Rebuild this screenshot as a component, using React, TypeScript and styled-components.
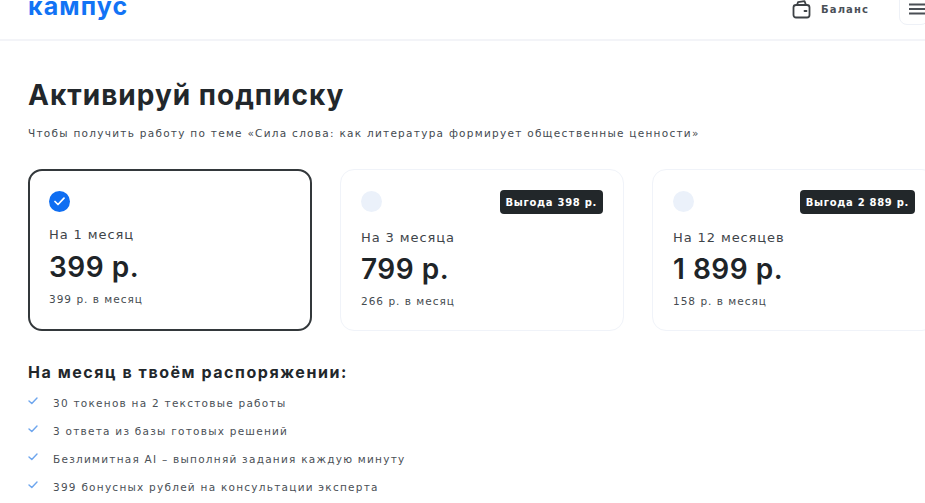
import styled, { createGlobalStyle } from 'styled-components';

const GlobalStyle = createGlobalStyle`
  html, body {
    margin: 0;
    padding: 0;
    background: #fff;
    overflow: hidden;
  }
  body {
    font-family: Inter, "Noto Sans", sans-serif;
    color: #1e2428;
  }
`;

const SMALL_FONT = '"DejaVu Sans", Inter, sans-serif';

const Page = styled.div`
  width: 925px;
  height: 503px;
  overflow: hidden;
`;

const Header = styled.header`
  height: 41px;
  box-sizing: border-box;
  padding-left: 28px;
  display: flex;
  align-items: flex-end;
  justify-content: space-between;
  border-bottom: 2px solid #f3f4f8;
  overflow: hidden;
`;

const Logo = styled.div`
  font-size: 25px;
  line-height: 24px;
  font-weight: 700;
  letter-spacing: 1.1px;
  color: #1273f5;
  margin-bottom: 21px;
`;

const HeaderRight = styled.div`
  display: flex;
  align-items: flex-end;
`;

const Balance = styled.div`
  display: flex;
  align-items: center;
  gap: 10px;
  margin-bottom: 20px;
  margin-right: 30px;
  font-family: ${SMALL_FONT};
  font-size: 10px;
  font-weight: 700;
  letter-spacing: 1.1px;
  color: #4a5058;
`;

const MenuButton = styled.div`
  width: 30px;
  height: 34px;
  margin-right: -4px;
  margin-bottom: 14px;
  box-sizing: border-box;
  border: 1px solid #eef1f7;
  border-radius: 8px;
  padding: 7px 0 0 9px;
  color: #4a4f55;
`;

const Main = styled.main`
  padding: 36px 0 0 28px;
`;

const Title = styled.h1`
  margin: 0;
  font-size: 28px;
  line-height: 36px;
  font-weight: 700;
  letter-spacing: 1px;
  color: #22272b;
`;

const Subtitle = styled.p`
  margin: 13px 0 0;
  font-family: ${SMALL_FONT};
  font-size: 10.5px;
  line-height: 14px;
  letter-spacing: 1.27px;
  white-space: nowrap;
  color: #444a50;
`;

const Plans = styled.div`
  display: flex;
  gap: 28px;
  margin-top: 29px;
`;

const Card = styled.div<{ $selected?: boolean }>`
  position: relative;
  flex: 0 0 284px;
  height: 162px;
  box-sizing: border-box;
  border-radius: 14px;
  padding: ${({ $selected }) => ($selected ? '20px 19px' : '21px 20px')};
  border: ${({ $selected }) => ($selected ? '2px solid #33383b' : '1px solid #f0f3f9')};
  background: #fff;
`;

const Radio = styled.div<{ $checked?: boolean }>`
  width: 21px;
  height: 21px;
  border-radius: 50%;
  background: ${({ $checked }) => ($checked ? '#0f6ef2' : '#ebf1fa')};
  display: flex;
  align-items: center;
  justify-content: center;
`;

const Badge = styled.div`
  position: absolute;
  top: 20px;
  right: 20px;
  height: 24px;
  padding: 0 6px;
  display: flex;
  align-items: center;
  border-radius: 4px;
  background: #22272a;
  color: #fff;
  font-family: ${SMALL_FONT};
  font-size: 10px;
  font-weight: 700;
  letter-spacing: 0.7px;
  white-space: nowrap;
`;

const Period = styled.div<{ $selected?: boolean }>`
  margin-top: ${({ $selected }) => ($selected ? '14px' : '17px')};
  font-family: ${SMALL_FONT};
  font-size: 13px;
  line-height: 18px;
  letter-spacing: 0.9px;
  color: #3e4449;
`;

const Price = styled.div<{ $selected?: boolean }>`
  margin-top: ${({ $selected }) => ($selected ? '5px' : '4px')};
  font-size: 28px;
  line-height: 36px;
  font-weight: 600;
  letter-spacing: 0.5px;
  color: #1e2428;
`;

const PerMonth = styled.div`
  margin-top: 7px;
  font-family: ${SMALL_FONT};
  font-size: 10.5px;
  line-height: 14px;
  letter-spacing: 1px;
  color: #454b50;
`;

const FeaturesTitle = styled.h2`
  margin: 31px 0 0;
  font-size: 16px;
  line-height: 20px;
  font-weight: 700;
  letter-spacing: 1.55px;
  color: #22272b;
`;

const FeatureList = styled.ul`
  list-style: none;
  margin: 14px 0 0;
  padding: 0;
  display: flex;
  flex-direction: column;
  gap: 14px;
`;

const Feature = styled.li`
  display: flex;
  align-items: center;
  gap: 15px;
  height: 14px;
  font-family: ${SMALL_FONT};
  font-size: 10.5px;
  letter-spacing: 1.25px;
  color: #4a5056;
`;

const CheckMark = styled.svg`
  width: 10px;
  height: 8px;
  margin-top: -4px;
  flex-shrink: 0;
`;

const PLANS = [
  { period: 'На 1 месяц', price: '399 р.', perMonth: '399 р. в месяц', selected: true },
  { period: 'На 3 месяца', price: '799 р.', perMonth: '266 р. в месяц', badge: 'Выгода 398 р.' },
  { period: 'На 12 месяцев', price: '1 899 р.', perMonth: '158 р. в месяц', badge: 'Выгода 2 889 р.' },
];

const FEATURES = [
  '30 токенов на 2 текстовые работы',
  '3 ответа из базы готовых решений',
  'Безлимитная AI – выполняй задания каждую минуту',
  '399 бонусных рублей на консультации эксперта',
];

const WalletIcon = () => (
  <svg width="19" height="19" viewBox="0 0 19 19" fill="none" stroke="#3d4145" strokeWidth="1.8">
    <rect x="1.5" y="5" width="16" height="12.5" rx="2.5" />
    <path d="M5 5 6 2.2 12.5 1.2 14 5" strokeLinejoin="round" />
    <path d="M12.5 11h2" strokeLinecap="round" />
  </svg>
);

const BurgerIcon = () => (
  <svg width="17" height="12" viewBox="0 0 17 12" fill="none" stroke="currentColor" strokeWidth="1.8">
    <path d="M0 1.5h17M0 6h17M0 10.5h17" />
  </svg>
);

export default function App() {
  return (
    <Page>
      <GlobalStyle />
      <Header>
        <Logo>кампус</Logo>
        <HeaderRight>
          <Balance>
            <WalletIcon />
            Баланс
          </Balance>
          <MenuButton>
            <BurgerIcon />
          </MenuButton>
        </HeaderRight>
      </Header>
      <Main>
        <Title>Активируй подписку</Title>
        <Subtitle>
          Чтобы получить работу по теме «Сила слова: как литература формирует общественные ценности»
        </Subtitle>
        <Plans>
          {PLANS.map((plan) => (
            <Card key={plan.period} $selected={plan.selected}>
              <Radio $checked={plan.selected}>
                {plan.selected && (
                  <svg width="11" height="9" viewBox="0 0 11 9" fill="none" stroke="#fff" strokeWidth="1.7">
                    <path d="M1 4.5 4 7.5 10 1.2" strokeLinecap="round" strokeLinejoin="round" />
                  </svg>
                )}
              </Radio>
              {plan.badge && <Badge>{plan.badge}</Badge>}
              <Period $selected={plan.selected}>{plan.period}</Period>
              <Price $selected={plan.selected}>{plan.price}</Price>
              <PerMonth>{plan.perMonth}</PerMonth>
            </Card>
          ))}
        </Plans>
        <FeaturesTitle>На месяц в твоём распоряжении:</FeaturesTitle>
        <FeatureList>
          {FEATURES.map((text) => (
            <Feature key={text}>
              <CheckMark viewBox="0 0 10 8" fill="none" stroke="#6ea6ee" strokeWidth="1.4">
                <path d="M1 4 3.8 6.6 9 1" strokeLinecap="round" strokeLinejoin="round" />
              </CheckMark>
              {text}
            </Feature>
          ))}
        </FeatureList>
      </Main>
    </Page>
  );
}
